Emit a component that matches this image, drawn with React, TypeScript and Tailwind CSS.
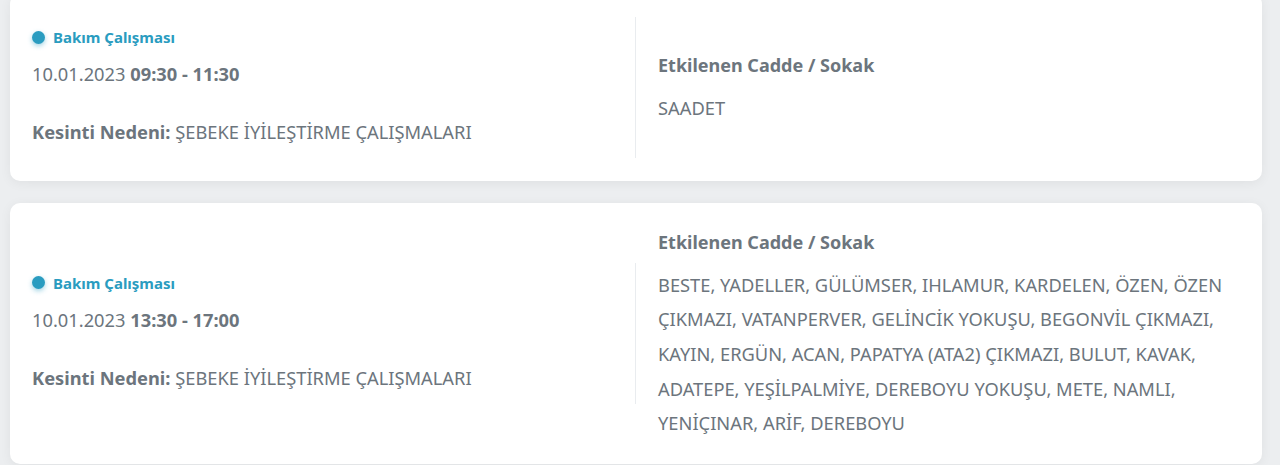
const font = { fontFamily: "'Noto Sans', Lato, sans-serif" };

type Outage = {
	date: string;
	time: string;
	reason: string;
	streets: string;
};

const outages: Outage[] = [
	{
		date: "10.01.2023",
		time: "09:30 - 11:30",
		reason: "ŞEBEKE İYİLEŞTİRME ÇALIŞMALARI",
		streets: "SAADET",
	},
	{
		date: "10.01.2023",
		time: "13:30 - 17:00",
		reason: "ŞEBEKE İYİLEŞTİRME ÇALIŞMALARI",
		streets:
			"BESTE, YADELLER, GÜLÜMSER, IHLAMUR, KARDELEN, ÖZEN, ÖZEN ÇIKMAZI, VATANPERVER, GELİNCİK YOKUŞU, BEGONVİL ÇIKMAZI, KAYIN, ERGÜN, ACAN, PAPATYA (ATA2) ÇIKMAZI, BULUT, KAVAK, ADATEPE, YEŞİLPALMİYE, DEREBOYU YOKUŞU, METE, NAMLI, YENİÇINAR, ARİF, DEREBOYU",
	},
];

function OutageCard({ item }: { item: Outage }) {
	return (
		<div className="rounded-[10px] bg-white px-[22px] py-[23px] shadow-[0_2px_12px_rgba(0,0,0,0.06)]">
			<div className="grid grid-cols-2 items-center">
				<div className="flex h-[141px] flex-col border-r border-[#e9ecef] pt-[10px]">
					<div className="flex h-[20px] items-center gap-[8px]">
						<span className="size-[13px] rounded-full bg-[#2a9cc0] shadow-[0_2px_5px_rgba(42,156,192,0.45)]" />
						<span className="text-[15px] font-bold leading-[20px] text-[#2a9cc0]">Bakım Çalışması</span>
					</div>
					<p className="mt-[14px] text-[18.3px] leading-[26px] text-[#6c757d]">
						{item.date} <span className="font-bold">{item.time}</span>
					</p>
					<p className="mt-[32px] text-[18.3px] leading-[26px] text-[#6c757d]">
						<span className="font-bold">Kesinti Nedeni:</span> {item.reason}
					</p>
				</div>
				<div className="pl-[22px] pt-[3px]">
					<h3 className="text-[18px] font-bold leading-[26px] text-[#6c757d]">Etkilenen Cadde / Sokak</h3>
					<p className="mt-[12.75px] text-[18.3px] leading-[34.6px] text-[#6c757d]">{item.streets}</p>
				</div>
			</div>
		</div>
	);
}

export default function App() {
	return (
		<div style={font} className="h-[465px] overflow-hidden bg-[#eceef0]">
			<div className="-mt-[6px] flex flex-col gap-[22px] px-[10px] pr-[18px]">
				{outages.map((o, i) => (
					<OutageCard key={i} item={o} />
				))}
			</div>
		</div>
	);
}
